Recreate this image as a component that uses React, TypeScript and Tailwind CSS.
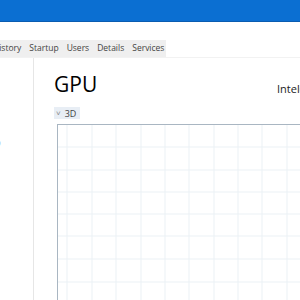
export default function App() {
  const cols = [67, 92, 116, 141, 165, 189, 214, 238, 262, 287];
  const rows = [148, 171, 193, 215, 237, 260, 283];
  const tabs = ["App history", "Startup", "Users", "Details", "Services"];

  return (
    <div className="flex h-[300px] w-[300px] flex-col overflow-hidden bg-white font-['Open_Sans',sans-serif] text-[#1f1f1f]">
      <div className="h-[22px] shrink-0 border-b border-[#0a5cb0] bg-[#0b6fd2]" />
      <div className="h-[18px] shrink-0 bg-white" />
      <div className="flex h-[17px] shrink-0 items-center">
        <div className="flex h-full w-[166px] items-center overflow-hidden bg-[#efefef] text-[8.5px] leading-none text-[#444]">
          <div className="-ml-[25px] flex items-center gap-[6px] whitespace-nowrap">
            {tabs.map((t) => (
              <span key={t} className="px-[1px]">
                {t}
              </span>
            ))}
          </div>
        </div>
      </div>
      <div className="flex min-h-0 flex-1 border-t border-[#f2f2f2]">
        <div className="flex w-[34px] shrink-0 flex-col border-r border-[#e6e6e6] pt-[80px]">
          <span className="-ml-[2px] text-[8px] leading-none text-[#555]">)</span>
        </div>
        <div className="flex min-w-0 flex-1 flex-col pl-[20px] pt-[16px]">
          <div className="flex items-end whitespace-nowrap">
            <span className="w-[223px] shrink-0 text-[21px] leading-none text-black">GPU</span>
            <span className="mb-[1px] text-[11px] leading-none text-[#222]">Intel(R) UHD Graphics</span>
          </div>
          <div className="mt-[12px] flex">
            <div className="flex h-[12px] items-center gap-[4px] bg-[#e8eef5] pl-[2px] pr-[4px] text-[9px] leading-none text-[#444]">
              <span className="text-[8px] text-[#888]">˅</span>
              <span>3D</span>
            </div>
          </div>
          <div className="ml-[3px] mt-[5px] flex-1 border-l border-t border-[#a9b6c2]">
            <svg width="300" height="200" className="block">
              {cols.map((x) => (
                <line key={x} x1={x - 58} y1={0} x2={x - 58} y2={200} stroke="#ebf1f5" strokeWidth="1" />
              ))}
              {rows.map((y) => (
                <line key={y} x1={0} y1={y - 126} x2={300} y2={y - 126} stroke="#ebf1f5" strokeWidth="1" />
              ))}
            </svg>
          </div>
        </div>
      </div>
    </div>
  );
}
